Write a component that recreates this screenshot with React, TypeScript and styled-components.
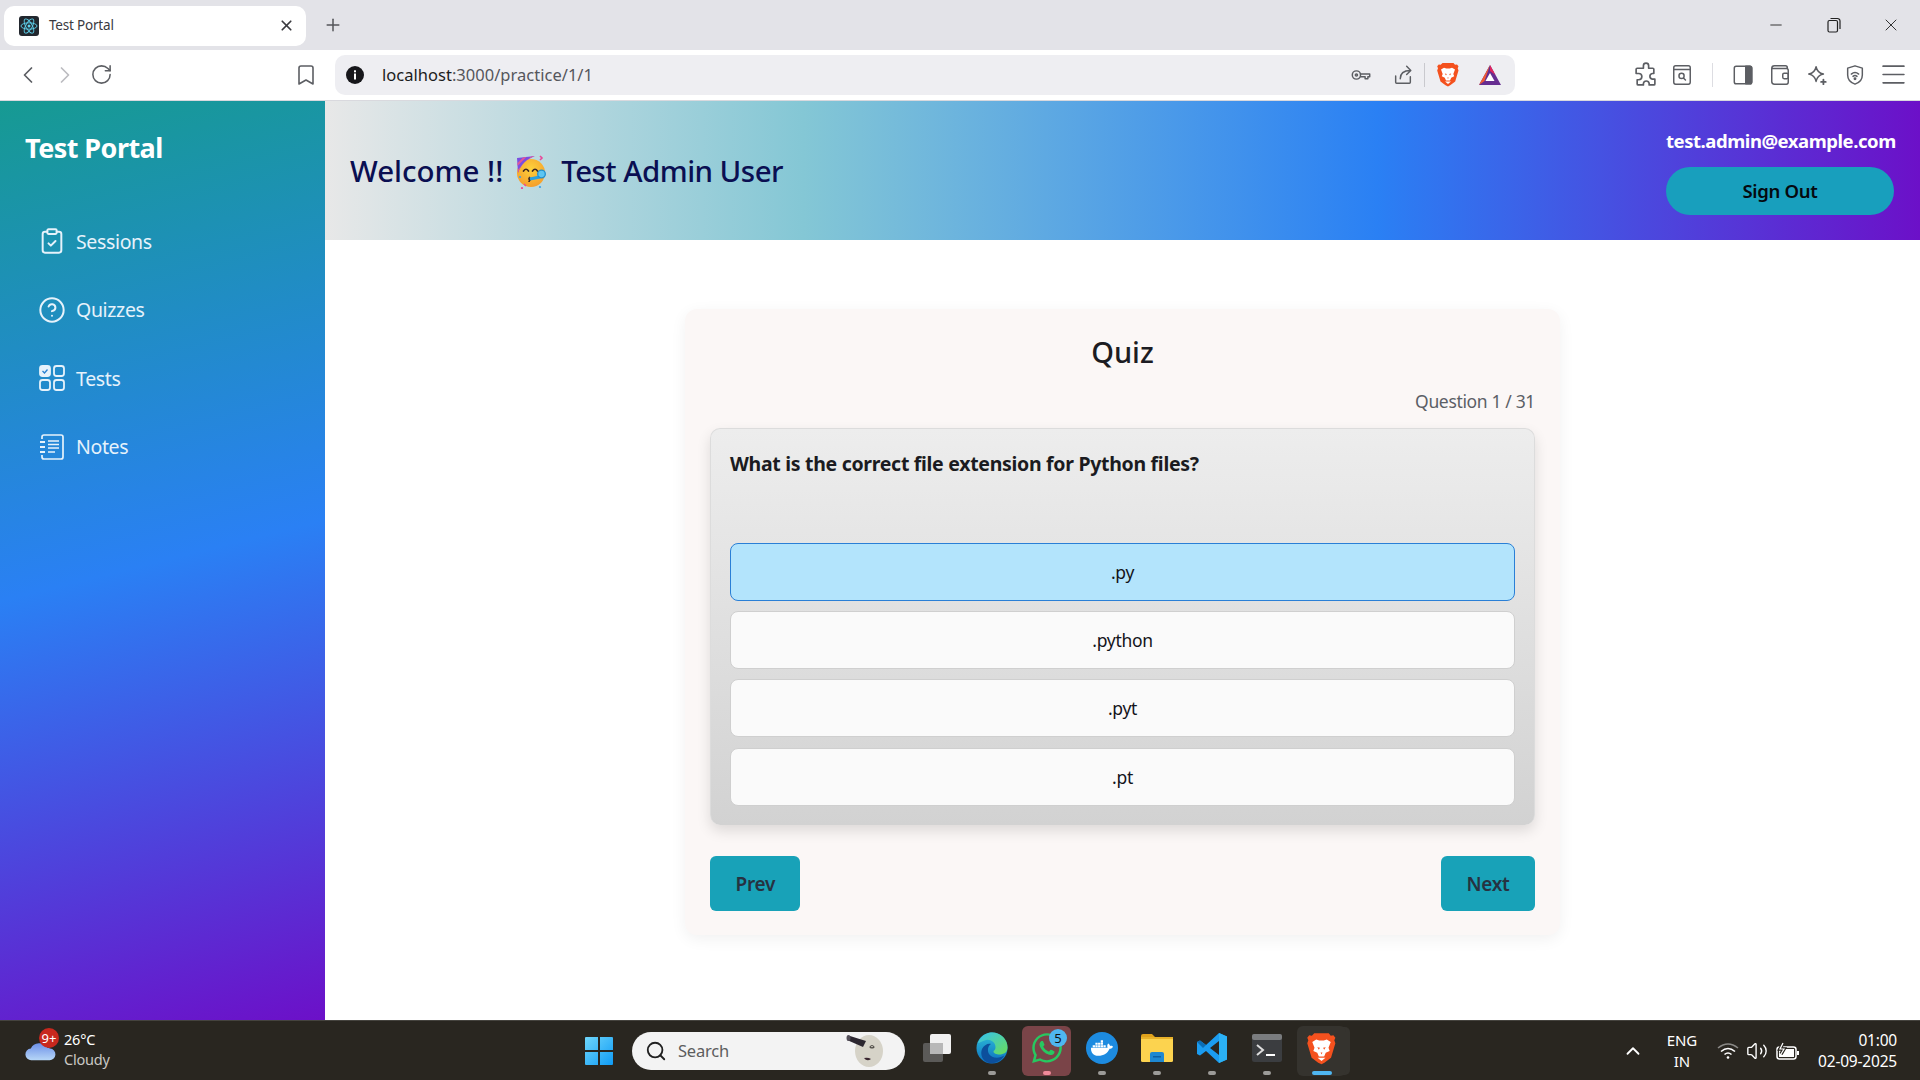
import React from 'react'
import styled, { createGlobalStyle } from 'styled-components'
import { ChevronLeft, ChevronRight, RotateCw, Bookmark, X, Plus, Minus, ClipboardCheck, CircleHelp, Search, ChevronUp, Volume2 } from 'lucide-react'
import { FaWhatsapp, FaDocker } from 'react-icons/fa'

const UI_FONT = `"Noto Sans", "Open Sans", sans-serif`

const GlobalStyle = createGlobalStyle`
  html, body {
    margin: 0;
    padding: 0;
    height: 100%;
    overflow: hidden;
    background: #fff;
    font-family: ${UI_FONT};
  }
  * { box-sizing: border-box; }
`

const Screen = styled.div`
  width: 1920px;
  height: 1080px;
  display: flex;
  flex-direction: column;
`

/* browser chrome */
const TabStrip = styled.div`
  height: 50px;
  background: #e3e3e8;
  display: flex;
  align-items: center;
  padding-left: 4px;
`

const Tab = styled.div`
  width: 302px;
  height: 40px;
  margin-top: 1px;
  background: #fff;
  border-radius: 10px;
  display: flex;
  align-items: center;
  padding: 0 11px 0 15px;
  gap: 10px;
  color: #3a3a3f;
`

const TabTitle = styled.span`
  flex: 1;
  font-size: 13.5px;
  line-height: 18px;
  margin-top: -2px;
  letter-spacing: -0.2px;
`

const NewTab = styled.div`
  width: 54px;
  display: flex;
  justify-content: center;
  color: #55565a;
`

const WindowControls = styled.div`
  margin-left: auto;
  display: flex;
  align-items: center;
  color: #222;
`

const WindowButton = styled.div`
  width: 57.5px;
  display: flex;
  justify-content: center;
  align-items: center;
`

const Toolbar = styled.div`
  height: 51px;
  background: #fff;
  border-bottom: 1px solid #d9d9de;
  display: flex;
  align-items: center;
  padding-bottom: 1px;
`

const NavGroup = styled.div`
  width: 335px;
  display: flex;
  align-items: center;
  padding: 0 16px 0 9px;
`

const Slot = styled.div<{ $width?: number }>`
  width: ${({ $width }) => $width ?? 37}px;
  height: 30px;
  display: flex;
  align-items: center;
  justify-content: center;
  flex-shrink: 0;
  color: #5c5e63;
`

const PushRight = styled.div`
  margin-left: auto;
  display: flex;
  align-items: center;
`

const AddressBar = styled.div`
  width: 1180px;
  height: 40px;
  background: #eeeef2;
  border-radius: 10px;
  display: flex;
  align-items: center;
  padding-left: 11px;
`

const Url = styled.div`
  margin-left: 18px;
  flex: 1;
  font-size: 16.5px;
  letter-spacing: 0.02px;
  color: #55565c;

  b {
    font-weight: 400;
    color: #1c1c20;
  }
`

const AddressActions = styled.div`
  display: flex;
  align-items: center;
  padding-right: 6px;
`

const Divider = styled.div<{ $color?: string }>`
  width: 1px;
  height: 24px;
  background: ${({ $color }) => $color ?? '#c9c9ce'};
`

const ToolbarActions = styled.div`
  flex: 1;
  display: flex;
  align-items: center;
  justify-content: flex-end;
  padding-right: 8px;
`

/* page */
const Body = styled.div`
  flex: 1;
  min-height: 0;
  display: flex;
`

const Sidebar = styled.aside`
  width: 325px;
  background: linear-gradient(166deg, #169a92 0%, #2a80f4 50%, #6c10c8 100%);
  color: #fff;
  padding: 28px 0 0 25px;
`

const Brand = styled.h1`
  margin: 0 0 54px;
  font-size: 27px;
  line-height: 38px;
  font-weight: 700;
  letter-spacing: -0.55px;
`

const NavList = styled.nav`
  display: flex;
  flex-direction: column;
  gap: 28.6px;
  padding-left: 13px;
`

const NavItem = styled.div`
  height: 40px;
  display: flex;
  align-items: center;
  gap: 10px;
  font-size: 19.5px;
  letter-spacing: -0.35px;
  color: #e6f2fb;
`

const Main = styled.main`
  flex: 1;
  min-width: 0;
  display: flex;
  flex-direction: column;
`

const Header = styled.header`
  height: 139px;
  background: linear-gradient(90deg, #e8e8e8 0%, #84c7d5 30%, #2a80f4 66%, #6c10c8 100%);
  display: flex;
  align-items: center;
  justify-content: space-between;
  padding: 0 26px 0 25px;
`

const Welcome = styled.div`
  display: flex;
  align-items: center;
  gap: 12px;
  font-size: 29.5px;
  font-weight: 500;
  letter-spacing: -0.55px;
  color: #0a0f52;
`

const Greeting = styled.span`
  letter-spacing: 0;
`

const UserBox = styled.div`
  width: 228px;
  display: flex;
  flex-direction: column;
  align-items: stretch;
  gap: 14px;
  padding-top: 2px;
`

const Email = styled.div`
  font-size: 18.5px;
  line-height: 24px;
  font-weight: 700;
  letter-spacing: -0.45px;
  color: #fff;
  text-align: right;
  white-space: nowrap;
`

const SignOut = styled.button`
  height: 48px;
  border: none;
  border-radius: 24px;
  background: #189fbd;
  color: #05090f;
  font-family: ${UI_FONT};
  font-size: 18.5px;
  font-weight: 600;
  letter-spacing: -0.3px;
`

const Content = styled.div`
  flex: 1;
  padding-top: 69px;
`

const Card = styled.section`
  width: 875px;
  margin: 0 auto;
  padding: 24px 25px 24px 25px;
  background: #fbf7f6;
  border-radius: 12px;
  box-shadow: 0 4px 16px rgba(0, 0, 0, 0.06);
`

const Title = styled.h2`
  margin: 0;
  font-size: 29px;
  line-height: 38px;
  font-weight: 500;
  text-align: center;
  color: #1c1c22;
`

const Counter = styled.div`
  margin-top: 18px;
  font-size: 17.5px;
  line-height: 24px;
  letter-spacing: -0.35px;
  text-align: right;
  color: #5b5f66;
`

const Panel = styled.div`
  margin-top: 15px;
  padding: 21px 19px 19px;
  border: 1px solid #dcdcdc;
  border-bottom: none;
  border-radius: 10px;
  background: linear-gradient(180deg, #ededed 0%, #d2d2d2 100%);
  box-shadow: 0 6px 14px rgba(0, 0, 0, 0.12);
`

const Question = styled.div`
  height: 93px;
  font-size: 19.5px;
  line-height: 28px;
  font-weight: 700;
  letter-spacing: -0.3px;
  color: #1b1b20;
`

const Options = styled.div`
  display: flex;
  flex-direction: column;
  gap: 10.2px;
`

const Option = styled.div<{ $selected?: boolean }>`
  height: 58px;
  display: flex;
  align-items: center;
  justify-content: center;
  border-radius: 8px;
  border: 1px solid ${({ $selected }) => ($selected ? '#2a7fd6' : '#cfcfcf')};
  background: ${({ $selected }) => ($selected ? '#b3e4fc' : '#fafafa')};
  font-size: 17.5px;
  letter-spacing: -0.3px;
  color: #14141a;
`

const Pager = styled.div`
  margin-top: 31px;
  display: flex;
  justify-content: space-between;
`

const PagerButton = styled.button`
  height: 55px;
  padding: 1px 25.5px 0;
  border: none;
  border-radius: 6px;
  background: #18a2b8;
  color: #263241;
  font-family: ${UI_FONT};
  font-size: 19px;
  font-weight: 600;
  letter-spacing: -0.3px;
`

/* windows taskbar */
const Taskbar = styled.footer`
  height: 60px;
  background: #292620;
  border-top: 1px solid #45433e;
  display: grid;
  grid-template-columns: 1fr auto 1fr;
  align-items: center;
`

const Weather = styled.div`
  display: flex;
  align-items: center;
  gap: 2px;
  padding-left: 24px;
`

const CloudBox = styled.div`
  position: relative;
  width: 38px;
  height: 36px;
  display: flex;
  align-items: flex-end;
  padding-bottom: 8px;
`

const Badge = styled.span<{ $bg: string; $color: string; $size: number }>`
  position: absolute;
  top: -5px;
  right: 3px;
  width: ${({ $size }) => $size}px;
  height: ${({ $size }) => $size}px;
  border-radius: 50%;
  background: ${({ $bg }) => $bg};
  color: ${({ $color }) => $color};
  font-size: 13px;
  line-height: ${({ $size }) => $size}px;
  text-align: center;
`

const WeatherText = styled.div`
  margin-bottom: 4px;
  font-size: 14.5px;
  line-height: 20px;
  letter-spacing: -0.2px;
  color: #fff;

  small {
    display: block;
    font-size: 14.5px;
    color: #c9c8c5;
  }
`

const TaskCenter = styled.div`
  display: flex;
  align-items: center;
  height: 100%;
`

const StartButton = styled.div`
  width: 56px;
  display: flex;
  justify-content: center;
`

const SearchPill = styled.div`
  width: 273px;
  height: 38px;
  margin: 0 4px 0 5px;
  border-radius: 19px;
  background: #f3f3f3;
  display: flex;
  align-items: center;
  padding: 0 21px 0 13px;
  gap: 11px;
  color: #202020;
  font-size: 16.5px;

  span {
    flex: 1;
    color: #5d5d5d;
    letter-spacing: -0.2px;
  }
`

const TaskIcon = styled.div<{ $bg?: string; $dot?: string; $wide?: boolean; $stacked?: boolean }>`
  position: relative;
  width: 55px;
  height: 50px;
  display: flex;
  align-items: center;
  justify-content: center;
  padding-bottom: 5px;

  &::before {
    content: '';
    position: absolute;
    inset: 0 3px;
    border-radius: 6px;
    background: ${({ $bg }) => $bg ?? 'transparent'};
    box-shadow: ${({ $stacked }) => ($stacked ? '5px 0 0 -1px #35332e' : 'none')};
  }

  &::after {
    content: '';
    position: absolute;
    bottom: 1px;
    left: 50%;
    width: ${({ $wide }) => ($wide ? 20 : 8)}px;
    height: 4px;
    margin-left: ${({ $wide }) => ($wide ? -10 : -4)}px;
    border-radius: 2px;
    background: ${({ $dot }) => $dot ?? '#9c9b98'};
  }

  > svg,
  > div {
    position: relative;
  }
`

const IconBadge = styled(Badge)`
  top: 3px;
  right: 7px;
  z-index: 1;
  font-size: 13px;
`

const DockerDisc = styled.div`
  width: 32px;
  height: 32px;
  border-radius: 50%;
  background: #1d8be0;
  display: flex;
  align-items: center;
  justify-content: center;
`

const Tray = styled.div`
  display: flex;
  align-items: center;
  justify-content: flex-end;
  color: #fff;
  padding-right: 23px;
`

const TraySlot = styled.div<{ $width: number }>`
  width: ${({ $width }) => $width}px;
  display: flex;
  justify-content: center;
`

const Lang = styled.div`
  width: 58px;
  margin-right: 2px;
  font-size: 15px;
  line-height: 21px;
  text-align: center;
  letter-spacing: -0.1px;
`

const Clock = styled.div`
  width: 92px;
  margin-left: 1px;
  font-size: 15.5px;
  line-height: 21px;
  text-align: right;
  letter-spacing: -0.2px;
  white-space: nowrap;
`

/* drawings */
const ReactFavicon = () => (
  <svg width="20" height="20" viewBox="0 0 20 20">
    <rect width="20" height="20" rx="3" fill="#22272e" />
    <g fill="none" stroke="#5fd3ee" strokeWidth="0.9">
      <ellipse cx="10" cy="10" rx="8" ry="3.2" />
      <ellipse cx="10" cy="10" rx="8" ry="3.2" transform="rotate(60 10 10)" />
      <ellipse cx="10" cy="10" rx="8" ry="3.2" transform="rotate(120 10 10)" />
    </g>
    <circle cx="10" cy="10" r="1.5" fill="#5fd3ee" />
  </svg>
)

const Brave = ({ size }: { size: number }) => (
  <svg width={size * 0.88} height={size} viewBox="0 0 22 25">
    <path d="M5.500 1h11l1.500 1.800 2-.3 1.500 1.800-.8 2 .8 2.200-3.300 11-5 3.800L11 24.500l-2.500-1.200-5-3.800L.2 8.500 1 6.300l-.8-2L1.700 2.500l2 .3z" fill="#f4511e" />
    <path d="M4 7.500l3-1.800 2.300.8h3.400L15 5.700l3 1.800-1.700 4.500.9 2.300-3 1.500L13 18.500h-4l-1.200-2.700-3-1.500.9-2.300z" fill="#fff" />
    <path d="M8 19.500h6L11 22z" fill="#fff" />
    <path d="M7.800 11.500l2 .5-.8 1.500zM14.200 11.500l-2 .5.8 1.500zM10.300 15.500h1.400l-.7 1.500z" fill="#f4511e" />
  </svg>
)

const BatLogo = () => (
  <svg width="24" height="22" viewBox="0 0 24 22">
    <path d="M12 1L1 21h22z" fill="#662d91" />
    <path d="M12 1L1 21l5.500-4z" fill="#f05a32" />
    <path d="M12 1l5.500 10L12 7z" fill="#e0245e" />
    <path d="M12 9L7.500 17h9z" fill="#fff" />
  </svg>
)

const Line = ({ children, size = 22, color = '#5c5e63', width = 1.6 }: { children: React.ReactNode; size?: number; color?: string; width?: number }) => (
  <svg width={size} height={size} viewBox="0 0 24 24" fill="none" stroke={color} strokeWidth={width} strokeLinecap="round" strokeLinejoin="round">
    {children}
  </svg>
)

const PartyFace = () => (
  <svg width="34" height="36" viewBox="0 0 34 36">
    <defs>
      <radialGradient id="faceFill" cx="0.5" cy="0.35" r="0.7">
        <stop offset="0" stopColor="#fdd23c" />
        <stop offset="1" stopColor="#f59a2a" />
      </radialGradient>
      <clipPath id="hatClip">
        <path d="M2 5l18-2C12 6 6 11 3 20z" />
      </clipPath>
    </defs>
    <circle cx="16" cy="20" r="14" fill="url(#faceFill)" />
    <path d="M2 5l18-2C12 6 6 11 3 20z" fill="#7a4fe0" />
    <g clipPath="url(#hatClip)" stroke="#e0559a" strokeWidth="2">
      <path d="M2 12L12 2M2 19L19 2" />
    </g>
    <path d="M8.500 18q2.500-3.500 5 0M17.500 18q2.500-3.500 5 0" stroke="#3e2723" strokeWidth="1.700" fill="none" strokeLinecap="round" />
    <path d="M15 24q-2 2 0 3q-1 1-1 2" stroke="#3e2723" strokeWidth="1.700" fill="none" />
    <path d="M15 26l10-2" stroke="#29a0e0" strokeWidth="3" />
    <circle cx="26.500" cy="21" r="3.800" fill="#5cc6f2" stroke="#1f8fd0" strokeWidth="1.300" />
    <path d="M25 3l2 2-2 2" stroke="#e8489a" strokeWidth="1.600" fill="none" />
    <circle cx="7" cy="35" r="1.100" fill="#e8489a" />
    <circle cx="5" cy="24" r="1.100" fill="#3aa0e8" />
    <circle cx="25" cy="34" r="1.100" fill="#3aa0e8" />
    <path d="M9 31l2 2" stroke="#e8489a" strokeWidth="1.200" />
  </svg>
)

const WinLogo = () => (
  <svg width="30" height="30" viewBox="0 0 30 30">
    <defs>
      <linearGradient id="win" x1="0" y1="0" x2="1" y2="1">
        <stop offset="0" stopColor="#6fd6fb" />
        <stop offset="1" stopColor="#0f9bf5" />
      </linearGradient>
    </defs>
    <path d="M1 2a1 1 0 0 1 1-1h12v13H1zM16 1h12a1 1 0 0 1 1 1v12H16zM1 16h13v13H2a1 1 0 0 1-1-1zM16 16h13v12a1 1 0 0 1-1 1H16z" fill="url(#win)" />
  </svg>
)

const SearchDoodle = () => (
  <svg width="38" height="36" viewBox="0 0 38 36">
    <ellipse cx="23" cy="18" rx="14" ry="16" fill="#d6d3c8" />
    <path d="M1 7l3-4 16 5-3 6z" fill="#2c2730" />
    <ellipse cx="2.500" cy="5" rx="2" ry="3" fill="#55505a" />
    <path d="M24 14q2-3 4 0q-2 2-4 0z" fill="none" stroke="#55524c" strokeWidth="1.200" />
    <path d="M18 25q4-1 7 1q-4 3-7-1z" fill="#3a2630" />
  </svg>
)

const TaskView = () => (
  <svg width="30" height="30" viewBox="0 0 30 30">
    <rect x="1" y="10" width="20" height="19" rx="2" fill="#5b5a58" />
    <rect x="8" y="1" width="21" height="20" rx="2" fill="#f1f1f1" />
    <rect x="8" y="10" width="13" height="11" fill="#b8b8b8" />
  </svg>
)

const EdgeLogo = () => (
  <svg width="32" height="32" viewBox="0 0 32 32">
    <defs>
      <linearGradient id="edgeA" x1="0" y1="0" x2="0" y2="1">
        <stop offset="0" stopColor="#2fc0d8" />
        <stop offset="1" stopColor="#0c6fc0" />
      </linearGradient>
      <linearGradient id="edgeB" x1="0" y1="0" x2="1" y2="1">
        <stop offset="0" stopColor="#35c1f1" />
        <stop offset="1" stopColor="#6ade57" />
      </linearGradient>
    </defs>
    <circle cx="16" cy="16" r="15.500" fill="url(#edgeA)" />
    <path d="M2 11C5 3 12 .5 16 .5c9 0 15.500 7 15.500 15 0 5-4 7-8 7-3 0-6-1-6-3 0-1 2-1 2-4.500C19.500 10 14 7 10 8c-4 1-7 3-8 3z" fill="url(#edgeB)" />
    <path d="M13 31C6 29 4 22 6 17c2-4 6-6 9-5-3 2-4 6-2 10 2 3 7 5 12 3 2-.5 3-1.500 3-1-3 5-9 8-15 7z" fill="#0c4f9c" />
  </svg>
)

const FolderLogo = () => (
  <svg width="34" height="30" viewBox="0 0 34 30">
    <path d="M1 3a2 2 0 0 1 2-2h9l3 3h-14z" fill="#e0a21c" />
    <rect x="1" y="4" width="32" height="25" rx="1.500" fill="#fcd34f" />
    <rect x="1" y="4" width="32" height="2" fill="#e9b22a" />
    <path d="M10 21a2 2 0 0 1 2-2h10a2 2 0 0 1 2 2v8H10z" fill="#1e88d2" />
    <rect x="13" y="23" width="8" height="1.500" fill="#0d5fa3" />
  </svg>
)

const VsCodeLogo = () => (
  <svg width="30" height="32" viewBox="0 0 30 32">
    <path d="M22 1L9 13 3 8.500 0 10v12l3 1.500L9 19l13 12 8-3.500V4.500zM22 9v14l-9-7z" fill="#1b9cf0" />
    <path d="M22 1l8 3.500v23L22 31z" fill="#2bb1f5" />
    <path d="M0 10l3-1.500L9 13l-3 3z" fill="#0b6db5" />
  </svg>
)

const TerminalLogo = () => (
  <svg width="30" height="28" viewBox="0 0 30 28">
    <rect width="30" height="28" rx="2.500" fill="#3b3d40" />
    <rect width="30" height="6" rx="2" fill="#7a7c7e" />
    <path d="M5 11l6 5-6 5" stroke="#ddd" strokeWidth="2" fill="none" />
    <rect x="14" y="20" width="9" height="2" fill="#fff" />
  </svg>
)

const Cloud = () => (
  <svg width="32" height="20" viewBox="0 0 36 24">
    <defs>
      <linearGradient id="cloud" x1="0" y1="0" x2="0" y2="1">
        <stop offset="0" stopColor="#6c8fe8" />
        <stop offset="1" stopColor="#b6d6f7" />
      </linearGradient>
    </defs>
    <path d="M8 23a7 7 0 0 1-1-14 11 10 0 0 1 20-1 5 5 0 0 1 3 1 7 7 0 0 1-1 14z" fill="url(#cloud)" />
  </svg>
)

const NAV_ITEMS = [
  { label: 'Sessions', icon: <ClipboardCheck size={28} strokeWidth={1.7} /> },
  { label: 'Quizzes', icon: <CircleHelp size={28} strokeWidth={1.7} /> },
  {
    label: 'Tests',
    icon: (
      <svg width="28" height="28" viewBox="0 0 28 28" fill="none" stroke="currentColor" strokeWidth="1.8">
        <rect x="2" y="2" width="10" height="10" rx="2.500" fill="currentColor" />
        <path d="M4.500 7l2 2 3-3.500" stroke="#2a80d0" strokeWidth="1.300" />
        <rect x="16" y="2" width="10" height="10" rx="2.500" />
        <rect x="2" y="16" width="10" height="10" rx="2.500" />
        <rect x="16" y="16" width="10" height="10" rx="2.500" />
      </svg>
    ),
  },
  {
    label: 'Notes',
    icon: (
      <svg width="28" height="28" viewBox="0 0 28 28" fill="none" stroke="currentColor" strokeWidth="1.700">
        <path d="M4 6V4a2 2 0 0 1 2-2h17a2 2 0 0 1 2 2v20a2 2 0 0 1-2 2H6a2 2 0 0 1-2-2v-2" />
        <path d="M10 8h11M10 11.500h11M10 15h11M10 19h7" />
        <path d="M2 9h5M2 14h5M2 19h5" strokeWidth="2.200" />
      </svg>
    ),
  },
]

const OPTIONS = ['.py', '.python', '.pyt', '.pt']

export default function App() {
  return (
    <Screen>
      <GlobalStyle />
      <TabStrip>
        <Tab>
          <ReactFavicon />
          <TabTitle>Test Portal</TabTitle>
          <X size={17} strokeWidth={2.4} />
        </Tab>
        <NewTab><Plus size={20} strokeWidth={1.8} /></NewTab>
        <WindowControls>
          <WindowButton><Minus size={18} strokeWidth={1.2} /></WindowButton>
          <WindowButton>
            <svg width="14" height="16" viewBox="0 0 14 16" fill="none" stroke="#222" strokeWidth="1.200">
              <rect x="1" y="3.500" width="9.500" height="11.500" rx="1.500" />
              <path d="M3.500 1.500h7a2.500 2.500 0 0 1 2.500 2.500v8" />
            </svg>
          </WindowButton>
          <WindowButton><X size={20} strokeWidth={1.1} /></WindowButton>
        </WindowControls>
      </TabStrip>

      <Toolbar>
        <NavGroup>
          <Slot><ChevronLeft size={28} strokeWidth={1.5} /></Slot>
          <Slot><ChevronRight size={28} strokeWidth={1.5} color="#bcbcc0" /></Slot>
          <Slot><RotateCw size={23} strokeWidth={1.6} /></Slot>
          <PushRight>
            <Slot $width={26}><Bookmark size={24} strokeWidth={1.6} /></Slot>
          </PushRight>
        </NavGroup>
        <AddressBar>
          <svg width="18" height="18" viewBox="0 0 18 18">
            <circle cx="9" cy="9" r="9" fill="#17171b" />
            <rect x="8" y="7.500" width="2" height="6" fill="#fff" />
            <rect x="8" y="4.300" width="2" height="2" fill="#fff" />
          </svg>
          <Url><b>localhost</b>:3000/practice/1/1</Url>
          <AddressActions>
            <Slot $width={42}>
              <Line>
                <circle cx="7" cy="12" r="4.500" />
                <circle cx="7" cy="12" r="1.200" />
                <path d="M11.500 11h10v3h-2v2h-3v-2h-5" />
              </Line>
            </Slot>
            <Slot $width={42}>
              <Line>
                <path d="M20 14v6a1 1 0 0 1-1 1H5a1 1 0 0 1-1-1v-7" />
                <path d="M9 16c0-5 3-9 11-9M16 2.500l4.500 4.500-4.500 4.500" />
              </Line>
            </Slot>
            <Divider />
            <Slot $width={46}><Brave size={25} /></Slot>
            <Slot $width={38}><BatLogo /></Slot>
          </AddressActions>
        </AddressBar>
        <ToolbarActions>
          <Slot $width={35}>
            <Line size={25}>
              <path d="M10 3.500a2.500 2.500 0 0 1 5 0V6h4a1 1 0 0 1 1 1v4h-1.500a2.800 2.800 0 0 0 0 5.500H21V21a1 1 0 0 1-1 1h-4.500v-1.500a2.800 2.800 0 0 0-5.500 0V22H5a1 1 0 0 1-1-1v-4h1.500a2.800 2.800 0 0 0 0-6H3V7a1 1 0 0 1 1-1h6z" />
            </Line>
          </Slot>
          <Slot>
            <Line>
              <rect x="3" y="2" width="18" height="20" rx="2" />
              <path d="M3 6h18" />
              <circle cx="11.500" cy="13" r="2.800" />
              <path d="M13.800 15.500l2 2" />
            </Line>
          </Slot>
          <Slot $width={24}><Divider $color="#dddde2" /></Slot>
          <Slot>
            <Line>
              <rect x="2.500" y="2.500" width="19" height="19" rx="2" />
              <path d="M15 2.500h4.500a2 2 0 0 1 2 2v15a2 2 0 0 1-2 2H15z" fill="#5c5e63" />
            </Line>
          </Slot>
          <Slot $width={37}>
            <Line>
              <path d="M20 5V4a2 2 0 0 0-2-2H6a3 3 0 0 0-3 3v14a3 3 0 0 0 3 3h13a2 2 0 0 0 2-2V7a2 2 0 0 0-2-2H4" />
              <rect x="15" y="10" width="6" height="6" rx="1.500" />
            </Line>
          </Slot>
          <Slot $width={38}>
            <Line>
              <path d="M11 3c1 5 3 7 8 8-5 1-7 3-8 8-1-5-3-7-8-8 5-1 7-3 8-8z" />
              <path d="M19 17v5M16.500 19.500h5" strokeWidth={2} />
            </Line>
          </Slot>
          <Slot $width={38}>
            <Line>
              <path d="M12 2l8 2.500V12c0 5-3.500 8.500-8 10-4.500-1.500-8-5-8-10V4.500z" />
              <path d="M8 11q4-3.500 8 0M9.800 13.500q2.200-2 4.400 0" />
              <circle cx="12" cy="16" r=".8" fill="#5c5e63" />
            </Line>
          </Slot>
          <Slot $width={38}>
            <Line size={25}>
              <path d="M2 4h20M2 12h20M2 20h20" />
            </Line>
          </Slot>
        </ToolbarActions>
      </Toolbar>

      <Body>
        <Sidebar>
          <Brand>Test Portal</Brand>
          <NavList>
            {NAV_ITEMS.map((item) => (
              <NavItem key={item.label}>
                {item.icon}
                {item.label}
              </NavItem>
            ))}
          </NavList>
        </Sidebar>
        <Main>
          <Header>
            <Welcome>
              <Greeting>Welcome !!</Greeting>
              <PartyFace />
              <span>Test Admin User</span>
            </Welcome>
            <UserBox>
              <Email>test.admin@example.com</Email>
              <SignOut>Sign Out</SignOut>
            </UserBox>
          </Header>
          <Content>
            <Card>
              <Title>Quiz</Title>
              <Counter>Question 1 / 31</Counter>
              <Panel>
                <Question>What is the correct file extension for Python files?</Question>
                <Options>
                  {OPTIONS.map((option, i) => (
                    <Option key={option} $selected={i === 0}>{option}</Option>
                  ))}
                </Options>
              </Panel>
              <Pager>
                <PagerButton>Prev</PagerButton>
                <PagerButton>Next</PagerButton>
              </Pager>
            </Card>
          </Content>
        </Main>
      </Body>

      <Taskbar>
        <Weather>
          <CloudBox>
            <Cloud />
            <Badge $bg="#c8281e" $color="#fff" $size={20}>9+</Badge>
          </CloudBox>
          <WeatherText>
            26°C
            <small>Cloudy</small>
          </WeatherText>
        </Weather>
        <TaskCenter>
          <StartButton><WinLogo /></StartButton>
          <SearchPill>
            <Search size={22} strokeWidth={2} />
            <span>Search</span>
            <SearchDoodle />
          </SearchPill>
          <TaskIcon $dot="transparent"><TaskView /></TaskIcon>
          <TaskIcon><EdgeLogo /></TaskIcon>
          <TaskIcon $bg="#7a4448" $dot="#f08a99">
            <FaWhatsapp size={34} color="#27c860" />
            <IconBadge $bg="#4fb6f0" $color="#111" $size={18}>5</IconBadge>
          </TaskIcon>
          <TaskIcon>
            <DockerDisc><FaDocker size={22} color="#fff" /></DockerDisc>
          </TaskIcon>
          <TaskIcon><FolderLogo /></TaskIcon>
          <TaskIcon><VsCodeLogo /></TaskIcon>
          <TaskIcon><TerminalLogo /></TaskIcon>
          <TaskIcon $bg="#35332e" $dot="#4fb6f0" $wide $stacked><Brave size={33} /></TaskIcon>
        </TaskCenter>
        <Tray>
          <TraySlot $width={40}><ChevronUp size={22} strokeWidth={2} /></TraySlot>
          <Lang>ENG<br />IN</Lang>
          <TraySlot $width={29}>
            <svg width="22" height="18" viewBox="0 0 22 18" fill="none" stroke="#fff" strokeWidth="1.600">
              <path d="M1 6q10-8 20 0" stroke="#8a8986" />
              <path d="M4 9.500q7-6 14 0M7.500 12.500q3.500-3 7 0" />
              <circle cx="11" cy="15.500" r="1.300" fill="#fff" stroke="none" />
            </svg>
          </TraySlot>
          <TraySlot $width={30}><Volume2 size={22} strokeWidth={1.5} /></TraySlot>
          <TraySlot $width={32}>
            <svg width="24" height="18" viewBox="0 0 24 18" fill="none" stroke="#fff" strokeWidth="1.500">
              <rect x="1" y="5" width="19" height="12" rx="2.500" />
              <rect x="3" y="7" width="15" height="8" fill="#fff" stroke="none" />
              <path d="M22 9v4" strokeWidth="2" />
              <path d="M7 1L4 7h4L5 12" stroke="#292620" strokeWidth="3.500" />
              <path d="M7 1L4 7h4L5 12" strokeWidth="1.200" />
            </svg>
          </TraySlot>
          <Clock>01:00<br />02-09-2025</Clock>
        </Tray>
      </Taskbar>
    </Screen>
  )
}
